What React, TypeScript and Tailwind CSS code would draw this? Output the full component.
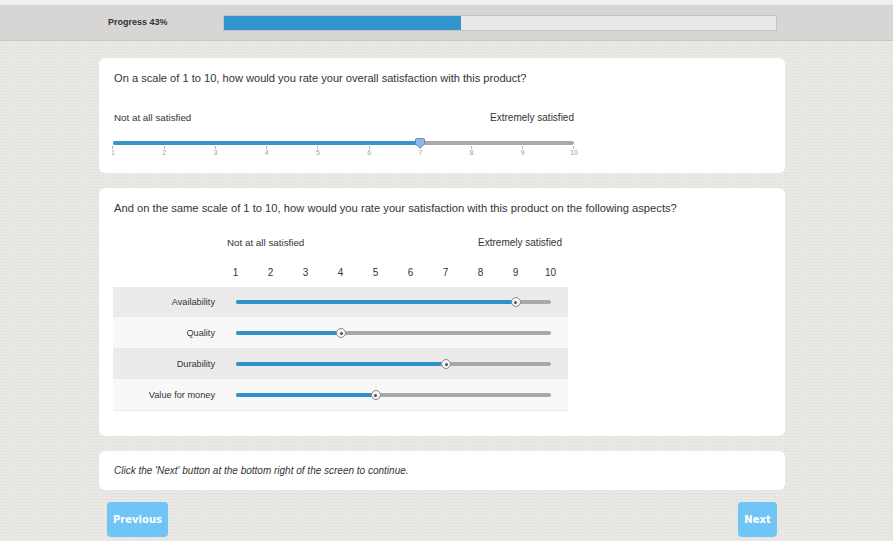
import React from "react";

const F = { fontFamily: '"Liberation Sans", Arial, sans-serif' };

function BigSlider({ value }: { value: number }) {
  const pct = ((value - 1) / 9) * 100;
  const nums = [1, 2, 3, 4, 5, 6, 7, 8, 9, 10];
  return (
    <div className="relative w-[461px] h-[20px]">
      <div className="absolute left-0 right-0 top-[2px] h-[4px] rounded-full bg-[#a9a9a9]" />
      <div className="absolute left-0 top-[2px] h-[4px] rounded-l-full bg-[#3795c9]" style={{ width: `${pct}%` }} />
      {nums.map((n, i) => (
        <div key={n} className="absolute top-[7px] flex flex-col items-center -translate-x-1/2" style={{ left: `${(i / 9) * 100}%` }}>
          <div className="w-px h-[3px] bg-[#b5b5b5]" />
          <div className="text-[7px] leading-[8px] text-[#a0a0a0]">{n}</div>
        </div>
      ))}
      <svg className="absolute top-[-1px] -translate-x-1/2" style={{ left: `${pct}%` }} width="11" height="11" viewBox="0 0 11 11">
        <path d="M1 1.5 Q1 0.5 2 0.5 H9 Q10 0.5 10 1.5 V6 L5.5 10 L1 6 Z" fill="#8fb8e6" stroke="#5b8cc4" strokeWidth="1" />
      </svg>
    </div>
  );
}

function RowSlider({ value }: { value: number }) {
  const pct = ((value - 1) / 9) * 100;
  return (
    <div className="relative w-[315px] h-[12px]">
      <div className="absolute left-0 right-0 top-[4px] h-[4px] rounded-full bg-[#a8a8a8]" />
      <div className="absolute left-0 top-[4px] h-[4px] rounded-l-full bg-[#2f92ca]" style={{ width: `${pct}%` }} />
      <div
        className="absolute top-[1px] w-[10px] h-[10px] -translate-x-1/2 rounded-full bg-[#f4f4f4] border border-[#8a8a8a] flex items-center justify-center"
        style={{ left: `${pct}%` }}
      >
        <div className="w-[3px] h-[3px] rounded-full bg-[#555]" />
      </div>
    </div>
  );
}

export default function App() {
  const rows = [
    { label: "Availability", value: 9 },
    { label: "Quality", value: 4 },
    { label: "Durability", value: 7 },
    { label: "Value for money", value: 5 },
  ];
  return (
    <div
      className="w-[893px] h-[541px] overflow-hidden bg-[#e9e8e4] bg-[radial-gradient(#dcdbd6_0.8px,transparent_1px)] bg-[length:3px_3px] text-[#333]"
      style={F}
    >
      <div className="h-[5px] bg-[#f0f0ef]" />
      <div className="h-[36px] bg-[#d7d6d4] border-b border-[#c8c7c4]">
        <div className="w-[686px] ml-[99px] h-full flex items-center pl-[9px] pr-[8px]">
          <div className="w-[115px] text-[9px] font-bold text-[#333]">Progress 43%</div>
          <div className="flex-1 h-[16px] bg-[#e8e8e8] border border-[#c4c4c4] mt-[1px]">
            <div className="h-full bg-[#3096cd]" style={{ width: "43%" }} />
          </div>
        </div>
      </div>

      <div className="w-[686px] ml-[99px] mt-[17px] flex flex-col">
        <div className="bg-white rounded-[6px] pl-[14px] pt-[12px] h-[115px]">
          <div className="text-[11.1px] leading-[16px] pl-[1px]">
            On a scale of 1 to 10, how would you rate your overall satisfaction with this product?
          </div>
          <div className="w-[461px] flex justify-between items-center text-[10px] leading-[14px] mt-[25px] pl-[1px]">
            <span className="text-[9.8px]">Not at all satisfied</span>
            <span>Extremely satisfied</span>
          </div>
          <div className="mt-[14px]">
            <BigSlider value={7} />
          </div>
        </div>

        <div className="bg-white rounded-[6px] pl-[14px] pt-[12px] mt-[15px] h-[248px]">
          <div className="text-[11.2px] leading-[16px] pl-[1px]">
            And on the same scale of 1 to 10, how would you rate your satisfaction with this product on the following aspects?
          </div>
          <div className="w-[335px] ml-[114px] flex justify-between items-center text-[10px] leading-[14px] mt-[20px]">
            <span className="text-[9.8px]">Not at all satisfied</span>
            <span>Extremely satisfied</span>
          </div>
          <div className="flex ml-[105px] mt-[16px] text-[10px] leading-[14px]">
            {[1, 2, 3, 4, 5, 6, 7, 8, 9, 10].map((n) => (
              <div key={n} className="w-[35px] text-center">{n}</div>
            ))}
          </div>
          <div className="w-[455px] mt-[7px] flex flex-col">
            {rows.map((r, i) => (
              <div
                key={r.label}
                className={`h-[31px] flex items-center border-b ${i % 2 === 0 ? "bg-[#ebebeb] border-[#f6f6f6]" : "bg-[#f8f8f8] border-[#e9e9e9]"}`}
              >
                <div className="w-[110px] pr-[8px] text-right text-[9.2px] pt-[1px]">{r.label}</div>
                <div className="pl-[13px]">
                  <RowSlider value={r.value} />
                </div>
              </div>
            ))}
          </div>
        </div>

        <div className="bg-white rounded-[6px] pl-[15px] mt-[15px] h-[39px] flex items-center">
          <span className="italic text-[10px]">Click the 'Next' button at the bottom right of the screen to continue.</span>
        </div>

        <div className="flex justify-between px-[8px] mt-[12px]" style={{ fontFamily: '"DejaVu Sans", Verdana, sans-serif' }}>
          <button className="h-[35px] w-[61px] rounded-[4px] bg-[#6fc6f6] text-white font-bold text-[10px]">Previous</button>
          <button className="h-[35px] w-[39px] rounded-[4px] bg-[#6fc6f6] text-white font-bold text-[10px]">Next</button>
        </div>
      </div>
    </div>
  );
}
